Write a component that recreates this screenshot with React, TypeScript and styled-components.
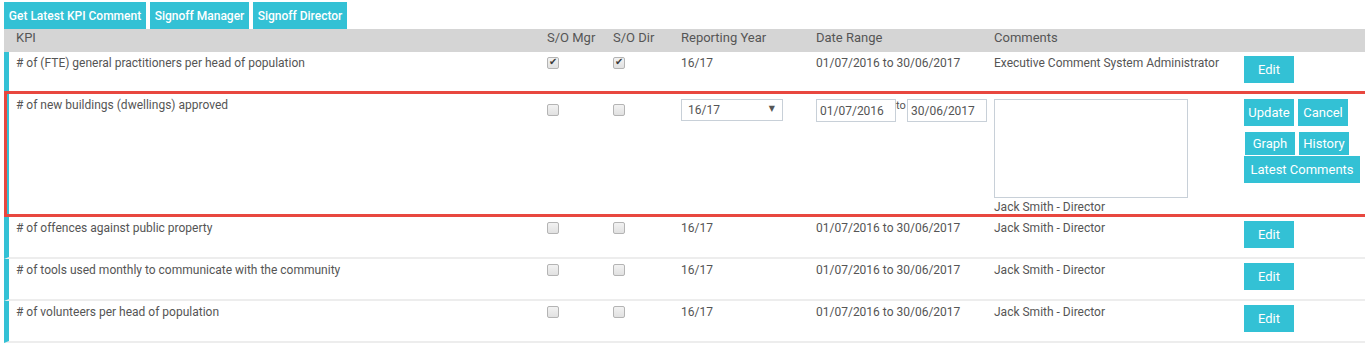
import * as React from 'react'
import styled, { createGlobalStyle } from 'styled-components'

const TEAL = '#33c1d5'
const RED = '#e8473f'
const TEXT = '#555'
const COLS = '531px 66px 68px 135px 178px 250px 1fr'

const GlobalStyle = createGlobalStyle`
  html, body {
    margin: 0;
    padding: 0;
    background: #fff;
    font-family: Roboto, 'Noto Sans', Arial, sans-serif;
    overflow: hidden;
  }
`

const Page = styled.div`
  padding: 2px 0 0 4px;
  width: 1361px;
`

const Toolbar = styled.div`
  display: flex;
  gap: 4px;
`

const ToolButton = styled.button<{ $w: number }>`
  width: ${(p) => p.$w}px;
  height: 27px;
  padding: 0;
  border: none;
  background: ${TEAL};
  color: #fff;
  font: 500 12px Roboto, sans-serif;
  white-space: nowrap;
  cursor: pointer;
`

const HeaderRow = styled.div`
  display: grid;
  grid-template-columns: ${COLS};
  height: 23px;
  padding-left: 5px;
  background: #d5d5d5;
`

const HeadCell = styled.div`
  padding: 1px 0 0 7px;
  font-size: 13px;
  line-height: 15px;
  color: ${TEXT};
`

const Row = styled.div<{ $h: number; $divider?: boolean }>`
  display: grid;
  grid-template-columns: ${COLS};
  box-sizing: border-box;
  height: ${(p) => p.$h}px;
  border-left: 5px solid ${TEAL};
  border-bottom: ${(p) => (p.$divider ? '2px solid #ededed' : 'none')};
`

const EditRow = styled.div`
  display: grid;
  grid-template-columns: ${COLS};
  box-sizing: border-box;
  height: 126px;
  margin-right: -6px;
  border: 3px solid ${RED};
  box-shadow: inset 2px 0 0 ${TEAL};
  padding-left: 2px;
`

const Cell = styled.div`
  padding: 4px 0 0 7px;
  font-size: 12px;
  line-height: 14px;
  color: ${TEXT};
  min-width: 0;
`

const Check = styled.input.attrs({ type: 'checkbox', disabled: true })<{ $top?: number }>`
  appearance: none;
  position: relative;
  display: block;
  width: 12px;
  height: 12px;
  margin: ${(p) => p.$top ?? 1}px 0 0 0;
  box-sizing: border-box;
  border: 1px solid #b4b4b4;
  border-radius: 2px;
  background: linear-gradient(#f2f2f2, #e1e1e1);

  &:checked::after {
    content: '✔';
    position: absolute;
    left: 1px;
    top: -2px;
    font: 10px 'DejaVu Sans', sans-serif;
    color: #3a3a3a;
  }
`

const ActionButton = styled.button<{ $w?: number; $h?: number }>`
  width: ${(p) => p.$w ?? 50}px;
  height: ${(p) => p.$h ?? 27}px;
  padding: 0;
  border: none;
  background: ${TEAL};
  color: #fff;
  font: 400 13px Roboto, sans-serif;
  cursor: pointer;
`

const SelectBox = styled.div`
  position: relative;
  width: 102px;
  margin-top: 1px;
`

const Select = styled.select`
  appearance: none;
  width: 102px;
  height: 22px;
  box-sizing: border-box;
  border: 1px solid #c8d0d8;
  border-radius: 0;
  background: #fff;
  padding: 0 0 0 6px;
  font: 12px Roboto, sans-serif;
  color: ${TEXT};
`

const Arrow = styled.span`
  position: absolute;
  right: 8px;
  top: 6px;
  font: 8px/8px 'DejaVu Sans', sans-serif;
  color: #555;
  pointer-events: none;
`

const DateRange = styled.div`
  display: flex;
  align-items: flex-start;
  margin-top: 1px;
`

const DateInput = styled.input`
  width: 80px;
  height: 23px;
  box-sizing: border-box;
  border: 1px solid #c8d0d8;
  padding: 0 0 0 3px;
  font: 12px Roboto, sans-serif;
  color: ${TEXT};
`

const ToLabel = styled.span`
  font-size: 11px;
  line-height: 11px;
  width: 11px;
  padding-top: 1px;
  color: ${TEXT};
`

const CommentArea = styled.textarea`
  display: block;
  width: 194px;
  height: 99px;
  box-sizing: border-box;
  border: 1px solid #c8d0d8;
  margin: 1px 0 2px 0;
  resize: none;
`

const ButtonStack = styled.div`
  display: flex;
  flex-direction: column;
  align-items: flex-start;
  margin-top: 1px;
`

const ButtonLine = styled.div<{ $mt?: number; $ml?: number }>`
  display: flex;
  gap: 4px;
  margin-top: ${(p) => p.$mt ?? 0}px;
  margin-left: ${(p) => p.$ml ?? 0}px;
`

type Kpi = {
  name: string
  mgr: boolean
  dir: boolean
  comment: string
}

const rowsAfter: Kpi[] = [
  { name: '# of offences against public property', mgr: false, dir: false, comment: 'Jack Smith - Director' },
  { name: '# of tools used monthly to communicate with the community', mgr: false, dir: false, comment: 'Jack Smith - Director' },
  { name: '# of volunteers per head of population', mgr: false, dir: false, comment: 'Jack Smith - Director' },
]

const KpiRow = ({ kpi, h, divider }: { kpi: Kpi; h: number; divider?: boolean }) => (
  <Row $h={h} $divider={divider}>
    <Cell>{kpi.name}</Cell>
    <Cell>
      <Check defaultChecked={kpi.mgr} />
    </Cell>
    <Cell>
      <Check defaultChecked={kpi.dir} />
    </Cell>
    <Cell>16/17</Cell>
    <Cell>01/07/2016 to 30/06/2017</Cell>
    <Cell>{kpi.comment}</Cell>
    <Cell>
      <ActionButton>Edit</ActionButton>
    </Cell>
  </Row>
)

export default function App() {
  return (
    <Page>
      <GlobalStyle />
      <Toolbar>
        <ToolButton $w={142}>Get Latest KPI Comment</ToolButton>
        <ToolButton $w={99}>Signoff Manager</ToolButton>
        <ToolButton $w={94}>Signoff Director</ToolButton>
      </Toolbar>
      <HeaderRow>
        <HeadCell>KPI</HeadCell>
        <HeadCell>S/O Mgr</HeadCell>
        <HeadCell>S/O Dir</HeadCell>
        <HeadCell>Reporting Year</HeadCell>
        <HeadCell>Date Range</HeadCell>
        <HeadCell>Comments</HeadCell>
        <HeadCell />
      </HeaderRow>
      <KpiRow
        h={39}
        kpi={{
          name: '# of (FTE) general practitioners per head of population',
          mgr: true,
          dir: true,
          comment: 'Executive Comment System Administrator',
        }}
      />
      <EditRow>
        <Cell># of new buildings (dwellings) approved</Cell>
        <Cell>
          <Check $top={6} />
        </Cell>
        <Cell>
          <Check $top={6} />
        </Cell>
        <Cell>
          <SelectBox>
            <Select defaultValue="16/17">
              <option>16/17</option>
              <option>17/18</option>
            </Select>
            <Arrow>▼</Arrow>
          </SelectBox>
        </Cell>
        <Cell>
          <DateRange>
            <DateInput defaultValue="01/07/2016" />
            <ToLabel>to</ToLabel>
            <DateInput defaultValue="30/06/2017" />
          </DateRange>
        </Cell>
        <Cell>
          <CommentArea />
          Jack Smith - Director
        </Cell>
        <Cell>
          <ButtonStack>
            <ButtonLine>
              <ActionButton>Update</ActionButton>
              <ActionButton>Cancel</ActionButton>
            </ButtonLine>
            <ButtonLine $mt={6} $ml={1}>
              <ActionButton $h={23}>Graph</ActionButton>
              <ActionButton $h={23}>History</ActionButton>
            </ButtonLine>
            <ButtonLine $mt={1}>
              <ActionButton $w={116}>Latest Comments</ActionButton>
            </ButtonLine>
          </ButtonStack>
        </Cell>
      </EditRow>
      {rowsAfter.map((k) => (
        <KpiRow key={k.name} kpi={k} h={42} divider />
      ))}
    </Page>
  )
}
